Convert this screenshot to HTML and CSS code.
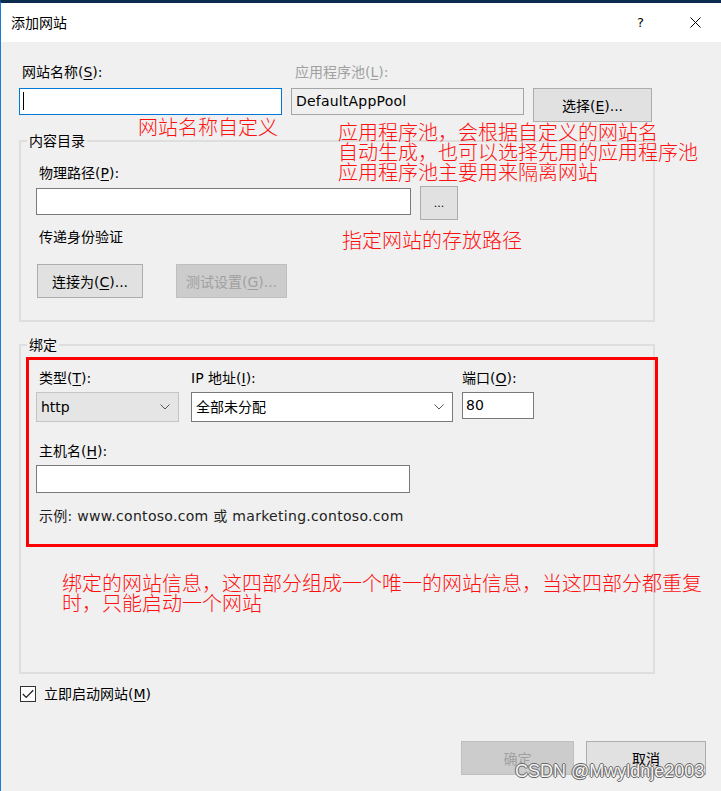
FILE: index.html
```html
<!DOCTYPE html>
<html>
<head>
    <title>添加网站</title>
    <meta charset="UTF-8">
    <link rel="stylesheet" href="styles.css">
</head>
<body>
    <div class="window">
        <div class="titlebar">
            <span class="title">添加网站</span>
            <span class="help">?</span>
            <svg class="close" width="11" height="11" viewBox="0 0 11 11">
                <path d="M0.5 0.5 L10.5 10.5 M10.5 0.5 L0.5 10.5" stroke="#000" stroke-width="1" fill="none"/>
            </svg>
        </div>

        <div class="dialog">
            <div class="site-row">
                <label class="lbl">网站名称(<u>S</u>):</label>
                <label class="lbl disabled">应用程序池(<u>L</u>):</label>
                <span></span>
                <div class="textbox focused"><span class="caret"></span></div>
                <div class="textbox readonly">DefaultAppPool</div>
                <button class="btn select-btn">选择(<u>E</u>)...</button>
            </div>

            <div class="group content-group">
                <div class="legend">内容目录</div>
                <label class="lbl path-label">物理路径(<u>P</u>):</label>
                <div class="path-row">
                    <div class="textbox path-box"></div>
                    <button class="btn browse-btn">...</button>
                </div>
                <div class="lbl auth-label">传递身份验证</div>
                <div class="auth-buttons">
                    <button class="btn connect-btn">连接为(<u>C</u>)...</button>
                    <button class="btn test-btn" disabled>测试设置(<u>G</u>)...</button>
                </div>
            </div>

            <div class="group binding-group">
                <div class="legend">绑定</div>
                <div class="binding-row">
                    <div class="col type-col">
                        <label class="lbl">类型(<u>T</u>):</label>
                        <div class="combo grey">http<svg class="chev" width="10" height="6" viewBox="0 0 10 6"><path d="M0.5 0.5 L5 5 L9.5 0.5" stroke="#555" fill="none"/></svg></div>
                    </div>
                    <div class="col ip-col">
                        <label class="lbl">IP 地址(<u>I</u>):</label>
                        <div class="combo">全部未分配<svg class="chev" width="10" height="6" viewBox="0 0 10 6"><path d="M0.5 0.5 L5 5 L9.5 0.5" stroke="#555" fill="none"/></svg></div>
                    </div>
                    <div class="col port-col">
                        <label class="lbl">端口(<u>O</u>):</label>
                        <div class="textbox port-box">80</div>
                    </div>
                </div>
                <label class="lbl host-label">主机名(<u>H</u>):</label>
                <div class="textbox host-box"></div>
                <div class="lbl example">示例: www.contoso.com 或 marketing.contoso.com</div>
            </div>

            <div class="check-row">
                <span class="checkbox">
                    <svg width="12" height="10" viewBox="0 0 12 10"><path d="M0.8 5 L4.2 8.4 L11.2 1.2" stroke="#222" stroke-width="1.3" fill="none"/></svg>
                </span>
                <span>立即启动网站(<u>M</u>)</span>
            </div>

            <div class="footer">
                <button class="btn ok-btn" disabled>确定</button>
                <button class="btn cancel-btn">取消</button>
            </div>
        </div>

        <!-- annotations drawn over the screenshot -->
        <div class="note note-name">网站名称自定义</div>
        <div class="note note-pool">应用程序池，会根据自定义的网站名<br>自动生成，也可以选择先用的应用程序池<br>应用程序池主要用来隔离网站</div>
        <div class="note note-path">指定网站的存放路径</div>
        <div class="note note-bind">绑定的网站信息，这四部分组成一个唯一的网站信息，当这四部分都重复<br>时，只能启动一个网站</div>
        <div class="red-box"></div>
        <div class="watermark">CSDN @Mwyldnje2003</div>
    </div>
</body>
</html>
```

FILE: styles.css
```css
html, body {
    margin: 0;
    padding: 0;
}
body {
    width: 721px;
    height: 791px;
    overflow: hidden;
    font-family: "DejaVu Sans", "Noto Sans CJK SC", sans-serif;
    font-size: 14px;
    line-height: 20px;
    color: #000;
    background: #f0f0f0;
}
.window {
    position: relative;
    height: 788px;
    border-top: 3px solid #0c2b4e;
    border-left: 1px solid #1c7bd4;
    background: #f0f0f0;
}
.titlebar {
    height: 39px;
    background: #fff;
    display: flex;
    align-items: center;
    padding-left: 10px;
}
.title {
    font-size: 14px;
    flex: 1;
}
.help {
    font-size: 13px;
    margin-right: 46px;
}
.close {
    margin-right: 20px;
}
.dialog {
    padding: 20px 0 0 18px;
}
u {
    text-decoration: underline;
    text-underline-offset: 2px;
}
.lbl {
    display: block;
    height: 20px;
    padding-left: 3px;
}
.disabled {
    color: #a0a0a0;
}

/* text boxes and buttons */
.textbox {
    box-sizing: border-box;
    height: 27px;
    background: #fff;
    border: 1px solid #7a7a7a;
    padding: 0 4px;
    line-height: 25px;
}
.textbox.focused {
    border-color: #0078d7;
}
.caret {
    display: block;
    width: 1px;
    height: 18px;
    background: #000;
    margin: 3px 0 0 -1px;
}
.textbox.readonly {
    background: #f0f0f0;
    border-color: #a5a5a5;
    letter-spacing: 0.2px;
}
.btn {
    box-sizing: border-box;
    height: 34px;
    background: #e1e1e1;
    border: 1px solid #adadad;
    font-family: inherit;
    font-size: 14px;
    color: #000;
    padding: 0;
}
.btn[disabled] {
    background: #cccccc;
    border-color: #bfbfbf;
    color: #a0a0a0;
}

/* first row */
.site-row {
    display: grid;
    grid-template-columns: 263px 233px 119px;
    column-gap: 9px;
    row-gap: 6px;
    align-items: start;
}
.site-row .lbl.disabled {
    padding-left: 4px;
}

/* group boxes */
.group {
    box-sizing: border-box;
    width: 636px;
    border: 2px solid #dedede;
    padding: 0 15px;
}
.legend {
    width: fit-content;
    height: 20px;
    margin: -11px 0 0 -9px;
    padding: 0 2px;
    background: #f0f0f0;
}
.content-group {
    margin-top: 18px;
    height: 182px;
}
.path-label {
    margin-top: 12px;
}
.path-row {
    display: flex;
    align-items: flex-start;
    margin-top: 3px;
}
.path-box {
    width: 375px;
    margin-top: 2px;
}
.browse-btn {
    width: 38px;
    margin-left: 9px;
    font-size: 11px;
}
.auth-label {
    margin-top: 7px;
}
.auth-buttons {
    display: flex;
    margin-top: 17px;
}
.connect-btn {
    width: 106px;
    margin-left: 1px;
}
.test-btn {
    width: 111px;
    margin-left: 33px;
}

.binding-group {
    margin-top: 22px;
    height: 330px;
}
.binding-row {
    display: flex;
    margin-top: 13px;
}
.col .lbl {
    margin-bottom: 4px;
}
.combo {
    box-sizing: border-box;
    height: 30px;
    border: 1px solid #7a7a7a;
    background: #fff;
    display: flex;
    align-items: center;
    justify-content: space-between;
    padding: 0 8px 0 4px;
}
.combo.grey {
    background: #e5e5e5;
    border-color: #c4c4c4;
}
.type-col .combo {
    width: 143px;
}
.ip-col {
    margin-left: 12px;
}
.ip-col .lbl {
    padding-left: 0;
}
.ip-col .combo {
    width: 262px;
}
.port-col {
    margin-left: 9px;
}
.port-col .lbl {
    padding-left: 0;
}
.port-box {
    width: 72px;
    padding-left: 3px;
}
.host-label {
    margin-top: 19px;
}
.host-box {
    width: 374px;
    height: 28px;
    margin-top: 4px;
}
.example {
    margin-top: 13px;
    color: #222;
    letter-spacing: 0.3px;
}

/* checkbox and footer */
.check-row {
    display: flex;
    align-items: center;
    height: 16px;
    margin-top: 12px;
}
.checkbox {
    box-sizing: border-box;
    width: 16px;
    height: 16px;
    margin-left: 1px;
    border: 1px solid #333;
    background: #fff;
    display: flex;
    align-items: center;
    justify-content: center;
    margin-right: 8px;
}
.footer {
    display: flex;
    justify-content: flex-end;
    margin-top: 39px;
    padding-right: 15px;
}
.ok-btn {
    width: 113px;
}
.cancel-btn {
    width: 120px;
    margin-left: 12px;
}

/* red annotations over the screenshot */
.note {
    position: absolute;
    color: #ff1010;
    font-family: "Noto Sans CJK SC", sans-serif;
    font-size: 20px;
    line-height: 20px;
    font-weight: 300;
    white-space: nowrap;
}
.note-name {
    left: 137px;
    top: 114px;
}
.note-pool {
    left: 337px;
    top: 119px;
}
.note-path {
    left: 341px;
    top: 227px;
}
.note-bind {
    left: 61px;
    top: 570px;
}
.red-box {
    position: absolute;
    left: 25px;
    top: 354px;
    width: 626px;
    height: 184px;
    border: 3px solid #ff0000;
}
.watermark {
    position: absolute;
    left: 514px;
    top: 758px;
    font-family: "Liberation Sans", Arial, sans-serif;
    font-size: 18px;
    color: #f4f4f4;
    text-shadow: 1px 0 #666, -1px 0 #666, 0 1px #666, 0 -1px #666;
    white-space: nowrap;
}
```
